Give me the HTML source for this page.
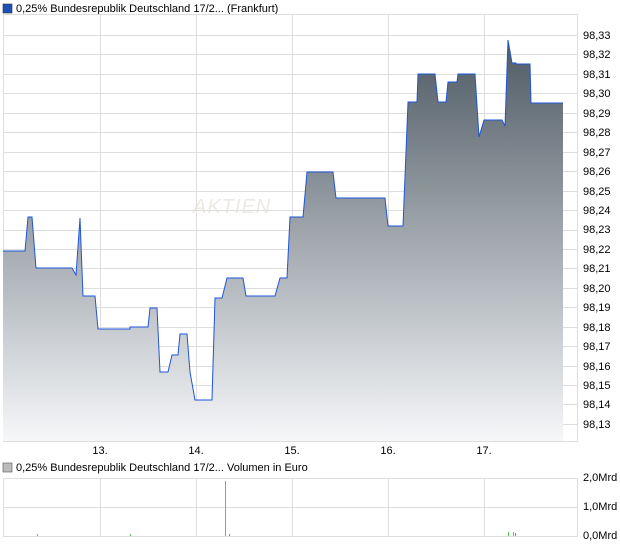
<!DOCTYPE html>
<html><head><meta charset="utf-8"><style>
body{margin:0;background:#fff;width:620px;height:546px;overflow:hidden;font-family:"Liberation Sans",sans-serif;font-size:11px;color:#000}
</style></head><body>
<svg width="620" height="546" xmlns="http://www.w3.org/2000/svg" font-family="Liberation Sans, sans-serif" font-size="11">
<defs><linearGradient id="g" x1="0" y1="40" x2="0" y2="441" gradientUnits="userSpaceOnUse"><stop offset="0" stop-color="#4e5a64"/><stop offset="1" stop-color="#f6f7f9"/></linearGradient></defs>
<rect x="3" y="4" width="9" height="9" fill="#1d4fb8" stroke="#333" stroke-width="0.6"/>
<text x="16" y="12">0,25% Bundesrepublik Deutschland 17/2... (Frankfurt)</text>
<rect x="3.5" y="14.5" width="574" height="427" fill="none" stroke="#ddd"/>
<g stroke="#ddd" stroke-width="1">
<path d="M100.5 15V441M196.5 15V441M292.5 15V441M388.5 15V441M484.5 15V441"/>
<path d="M3 35.5H578M3 54.5H578M3 74.5H578M3 93.5H578M3 113.5H578M3 132.5H578M3 152.5H578M3 171.5H578M3 191.5H578M3 210.5H578M3 230.5H578M3 249.5H578M3 268.5H578M3 288.5H578M3 307.5H578M3 327.5H578M3 346.5H578M3 366.5H578M3 385.5H578M3 404.5H578M3 424.5H578"/>
</g>
<path d="M3 251H25L28 217H32L36 268H72L76 275L80 218L83 296H95L98 329H130V327H148L150 308H157L160 372H168L172 355H178L180 334H187L190 372L195 400H212L215 298H222L227 278H243L246 296H275L280 278H287L290 217H303L307 172H333L336 198H385L388 226H403L408 102H417L418 74H435L438 102H446L448 82H457L458 74H475L479 137L484 120H502L505 126L508 40L512 63H516V64H530L531 103H563V441H3Z" fill="url(#g)"/>
<path d="M3 251H25L28 217H32L36 268H72L76 275L80 218L83 296H95L98 329H130V327H148L150 308H157L160 372H168L172 355H178L180 334H187L190 372L195 400H212L215 298H222L227 278H243L246 296H275L280 278H287L290 217H303L307 172H333L336 198H385L388 226H403L408 102H417L418 74H435L438 102H446L448 82H457L458 74H475L479 137L484 120H502L505 126L508 40L512 63H516V64H530L531 103H563" fill="none" stroke="#1f55d8" stroke-width="1"/>
<text x="193" y="213" font-size="20" font-style="italic" fill="#e6e0d8" fill-opacity="0.7" letter-spacing="1">AKTIEN</text>
<g text-anchor="start">
<text x="583" y="39">98,33</text><text x="583" y="78">98,31</text><text x="583" y="97">98,30</text><text x="583" y="117">98,29</text><text x="583" y="136">98,28</text><text x="583" y="156">98,27</text><text x="583" y="175">98,26</text><text x="583" y="195">98,25</text><text x="583" y="214">98,24</text><text x="583" y="233">98,23</text><text x="583" y="253">98,22</text><text x="583" y="272">98,21</text><text x="583" y="292">98,20</text><text x="583" y="311">98,19</text><text x="583" y="331">98,18</text><text x="583" y="350">98,17</text><text x="583" y="370">98,16</text><text x="583" y="389">98,15</text><text x="583" y="408">98,14</text><text x="583" y="428">98,13</text>
<text x="583" y="58">98,32</text>
</g>
<g text-anchor="middle"><text x="100" y="454">13.</text><text x="196" y="454">14.</text><text x="292" y="454">15.</text><text x="388" y="454">16.</text><text x="484" y="454">17.</text></g>
<rect x="3" y="463" width="9" height="9" fill="#bbb" stroke="#555" stroke-width="0.6"/>
<text x="16" y="471">0,25% Bundesrepublik Deutschland 17/2... Volumen in Euro</text>
<rect x="3.5" y="478.5" width="574" height="58" fill="none" stroke="#ddd"/>
<path d="M100.5 478V536M196.5 478V536M292.5 478V536M388.5 478V536M484.5 478V536M3 507.5H578" stroke="#ddd"/>
<path d="M225.5 481V536" stroke="#999"/>
<path d="M508.5 532V536M513.5 532V536M37.5 534V536M130.5 534V536" stroke="#5c5"/>
<path d="M515.5 533V536M229.5 534V536" stroke="#d66"/>
<text x="583" y="481">2,0Mrd</text><text x="583" y="510">1,0Mrd</text><text x="583" y="539">0,0Mrd</text>
</svg>
</body></html>
